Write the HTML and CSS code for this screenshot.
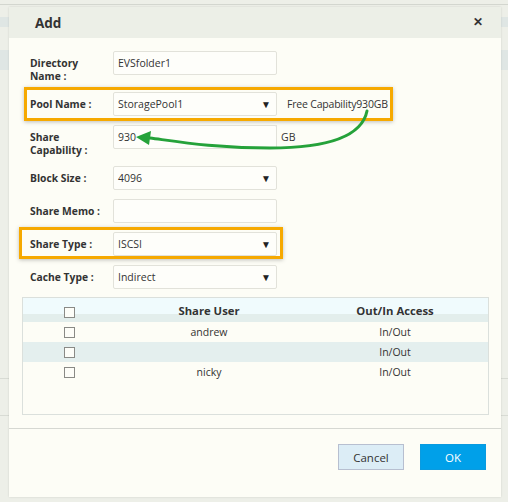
FILE: index.html
```html
<!DOCTYPE html>
<html>
<head>
<meta charset="utf-8">
<link rel="stylesheet" href="styles.css">
</head>
<body>
<div class="modal">
  <div class="modal-header">
    <span class="title">Add</span>
    <span class="close">✕</span>
  </div>
  <div class="modal-body">
    <div class="form">
      <div class="row">
        <label class="lbl two">Directory<br>Name :</label>
        <div class="ctrl input">EVSfolder1</div>
      </div>
      <div class="row hl-pool">
        <label class="lbl">Pool Name :</label>
        <div class="ctrl select">StoragePool1<span class="caret">▼</span></div>
        <span class="note">Free Capability930GB</span>
      </div>
      <div class="row">
        <label class="lbl two">Share<br>Capability :</label>
        <div class="ctrl input">930</div>
        <div class="addon">GB</div>
      </div>
      <div class="row">
        <label class="lbl">Block Size :</label>
        <div class="ctrl select">4096<span class="caret">▼</span></div>
      </div>
      <div class="row">
        <label class="lbl">Share Memo :</label>
        <div class="ctrl input"></div>
      </div>
      <div class="row hl-type">
        <label class="lbl">Share Type :</label>
        <div class="ctrl select">ISCSI<span class="caret">▼</span></div>
      </div>
      <div class="row">
        <label class="lbl">Cache Type :</label>
        <div class="ctrl select">Indirect<span class="caret">▼</span></div>
      </div>
    </div>
    <svg class="arrow" width="260" height="60" viewBox="130 100 260 60">
      <path d="M367,111 C362,136 330,148 270,148 C215,148 180,142 150,138" fill="none" stroke="#25a23a" stroke-width="3" stroke-linecap="round"/>
      <polygon points="136,137 151,131 149,145" fill="#25a23a"/>
    </svg>
    <div class="table">
      <div class="tr th">
        <div class="c1"><span class="cb"></span></div>
        <div class="c2">Share User</div>
        <div class="c3">Out/In Access</div>
      </div>
      <div class="tr">
        <div class="c1"><span class="cb"></span></div>
        <div class="c2">andrew</div>
        <div class="c3">In/Out</div>
      </div>
      <div class="tr alt">
        <div class="c1"><span class="cb"></span></div>
        <div class="c2"></div>
        <div class="c3">In/Out</div>
      </div>
      <div class="tr">
        <div class="c1"><span class="cb"></span></div>
        <div class="c2">nicky</div>
        <div class="c3">In/Out</div>
      </div>
    </div>
  </div>
  <div class="modal-footer">
    <button class="btn cancel">Cancel</button>
    <button class="btn ok">OK</button>
  </div>
</div>
</body>
</html>
```
FILE: styles.css
```css
html, body {
  margin: 0;
  padding: 0;
}
body {
  width: 508px;
  height: 502px;
  overflow: hidden;
  font-family: "Open Sans", "Noto Sans", sans-serif;
  color: #333;
  background:
    linear-gradient(#d3d6cf, #d3d6cf) 0 4px / 100% 1px no-repeat,
    linear-gradient(#dfe6e4, #dfe6e4) 0 17px / 100% 10px no-repeat,
    linear-gradient(#dfe6e4, #dfe6e4) 0 50px / 100% 20px no-repeat,
    linear-gradient(#d8dbd4, #d8dbd4) 0 378px / 100% 1px no-repeat,
    linear-gradient(#d8dbd4, #d8dbd4) 0 415px / 100% 1px no-repeat,
    #edefe8;
}
.modal {
  position: absolute;
  left: 9px;
  top: 7px;
  width: 492px;
  height: 490px;
  background: #fdfdf6;
  box-shadow: 0 0 2px rgba(0,0,0,0.12);
  display: flex;
  flex-direction: column;
}
.modal-header {
  height: 31px;
  background: #ecefe7;
  display: flex;
  align-items: center;
  justify-content: space-between;
  padding: 0 18px 0 26px;
}
.title {
  font-size: 13.5px;
  font-weight: 700;
  color: #333;
}
.close {
  font-size: 12px;
  font-weight: 700;
  color: #333;
  margin-top: -2px;
}
.modal-body {
  position: relative;
  flex: 1;
  padding: 13px 12px 13px 13px;
  display: flex;
  flex-direction: column;
}
.form {
  display: flex;
  flex-direction: column;
  gap: 9px;
  padding-left: 8px;
}
.row {
  position: relative;
  display: flex;
  align-items: flex-start;
}
.lbl {
  width: 83px;
  font-size: 10.3px;
  font-weight: 700;
  line-height: 24px;
  color: #333;
}
.lbl.two {
  line-height: 13px;
  padding-top: 6px;
}
.ctrl {
  box-sizing: border-box;
  width: 164px;
  height: 24px;
  border: 1px solid #e2e2da;
  border-radius: 2px;
  background: #fefefa;
  font-size: 10.5px;
  line-height: 22px;
  padding: 0 4px;
  color: #333;
  position: relative;
}
.caret {
  position: absolute;
  right: 5px;
  top: 0;
  font-size: 10px;
  color: #222;
}
.note {
  font-size: 10.5px;
  letter-spacing: -0.2px;
  line-height: 24px;
  margin-left: 10px;
  color: #333;
}
.addon {
  box-sizing: border-box;
  width: 115px;
  height: 24px;
  border-left: 1px solid #e2e2da;
  font-size: 10.5px;
  line-height: 24px;
  padding-left: 4px;
  margin-left: -1px;
}
.hl-pool::before,
.hl-type::before {
  content: "";
  position: absolute;
  border: 3px solid #f6a900;
  box-shadow: 0 1px 4px rgba(0,0,0,0.25);
  pointer-events: none;
}
.hl-pool::before {
  left: -6px;
  top: -5px;
  width: 363px;
  height: 28px;
}
.hl-type::before {
  left: -11px;
  top: -5px;
  width: 258px;
  height: 26px;
}
.arrow {
  position: absolute;
  left: 121px;
  top: 62px;
}
.table {
  margin-top: 8px;
  flex: 1;
  border: 1px solid #dbe0dc;
  background: #fdfdf6;
}
.tr {
  display: flex;
  height: 20px;
  align-items: center;
  font-size: 10.5px;
}
.tr.th {
  height: 24px;
  background: linear-gradient(#f0fbfd 0 16px, #e3eeec 16px);
  font-weight: 700;
  font-size: 11.3px;
  align-items: flex-start;
}
.tr.th > div {
  padding-top: 5px;
}
.tr.alt {
  background: #e4efee;
}
.c1 {
  width: 93px;
  display: flex;
  justify-content: center;
}
.c2 {
  width: 186px;
  text-align: center;
}
.c3 {
  flex: 1;
  text-align: center;
}
.cb {
  display: block;
  box-sizing: border-box;
  width: 11px;
  height: 11px;
  border: 1px solid #8a8a86;
  background: #fdfdf8;
}
.tr.th .cb {
  margin-top: 4px;
}
.modal-footer {
  height: 53px;
  border-top: 1px solid #d6d8d2;
  display: flex;
  justify-content: flex-end;
  align-items: flex-start;
  gap: 16px;
  padding: 15px 15px 0 0;
}
.btn {
  box-sizing: border-box;
  width: 66px;
  height: 26px;
  font-family: "Open Sans", "Noto Sans", sans-serif;
  font-size: 11.5px;
  border-radius: 0;
  padding: 0;
}
.cancel {
  background: #dcedf6;
  border: 1px solid #b7bfd0;
  color: #333;
}
.ok {
  background: #00a0e9;
  border: 1px solid #0a9be0;
  color: #fff;
}
```
